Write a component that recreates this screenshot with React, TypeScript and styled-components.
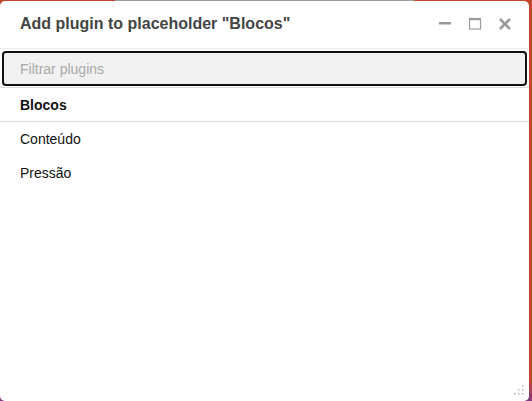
import styled, { createGlobalStyle } from "styled-components";

const GlobalStyle = createGlobalStyle`
    html, body {
        margin: 0;
        padding: 0;
        width: 532px;
        height: 401px;
        overflow: hidden;
    }
    body {
        font-family: "Liberation Sans", Arial, sans-serif;
        background:
            linear-gradient(#9b9b9b, #9b9b9b) 115px 0 / 299px 1px no-repeat,
            linear-gradient(to bottom, #c2462b 0, #c2462b 380px, #7f3a86 401px);
    }
`

const Dialog = styled.div`
    position: relative;
    margin-top: 1px;
    width: 529px;
    height: 400px;
    background: #fff;
    border-radius: 5px;
    display: flex;
    flex-direction: column;
    overflow: hidden;
`

const Header = styled.div`
    display: flex;
    align-items: center;
    height: 47px;
    padding: 0 17px 0 20px;
    border-bottom: 1px solid #ececec;
`

const Title = styled.h1`
    flex: 1;
    margin: 0;
    font-size: 16px;
    font-weight: 700;
    color: #444;
    padding-bottom: 2px;
`

const Controls = styled.div`
    display: flex;
    align-items: center;
    gap: 16px;
    padding-bottom: 2px;
`

const IconButton = styled.button`
    width: 14px;
    height: 14px;
    padding: 0;
    border: none;
    background: none;
    display: flex;
    align-items: center;
    justify-content: center;
    color: #9a9a9a;
    cursor: pointer;
`

const SearchBar = styled.div`
    padding: 2px 2px 1px;
    border-bottom: 1px solid #dcdcdc;
`

const SearchInput = styled.input`
    box-sizing: border-box;
    width: 100%;
    height: 35px;
    border: 2px solid #111;
    border-radius: 4px;
    background: #f1f1f1;
    padding: 0 0 0 16px;
    font-family: inherit;
    font-size: 14px;
    color: #333;
    outline: none;
    caret-color: #111;
    &::placeholder {
        color: #a9a9a9;
    }
`

const List = styled.ul`
    list-style: none;
    margin: 0;
    padding: 0;
`

const Item = styled.li<{ $group?: boolean }>`
    display: flex;
    align-items: center;
    height: ${p => p.$group ? "33px" : "34px"};
    padding-left: 20px;
    font-size: 14px;
    color: #111;
    font-weight: ${p => p.$group ? 700 : 400};
    border-bottom: ${p => p.$group ? "1px solid #dcdcdc" : "none"};
`

const Grip = styled.svg`
    position: absolute;
    right: 4px;
    bottom: 5px;
`

const items = ["Conteúdo", "Pressão"]

function App() {
    return (
        <>
            <GlobalStyle />
            <Dialog>
                <Header>
                    <Title>Add plugin to placeholder "Blocos"</Title>
                    <Controls>
                        <IconButton aria-label="minimize">
                            <svg width="14" height="14" viewBox="0 0 14 14">
                                <rect x="1" y="5" width="12" height="2.5" fill="currentColor" />
                            </svg>
                        </IconButton>
                        <IconButton aria-label="maximize">
                            <svg width="14" height="14" viewBox="0 0 14 14">
                                <rect x="1.5" y="1.5" width="11" height="10.5" fill="none" stroke="currentColor" strokeWidth="1.2" />
                                <rect x="1" y="1" width="12" height="2.2" fill="currentColor" />
                            </svg>
                        </IconButton>
                        <IconButton aria-label="close">
                            <svg width="14" height="14" viewBox="0 0 14 14">
                                <path d="M2 2 L12 12 M12 2 L2 12" stroke="currentColor" strokeWidth="2.6" />
                            </svg>
                        </IconButton>
                    </Controls>
                </Header>
                <SearchBar>
                    <SearchInput autoFocus placeholder="Filtrar plugins" />
                </SearchBar>
                <List>
                    <Item $group>Blocos</Item>
                    {items.map(item => <Item key={item}>{item}</Item>)}
                </List>
                <Grip width="12" height="12" viewBox="0 0 12 12">
                    <g fill="#b8b8b8">
                        <rect x="9" y="1" width="1.5" height="1.5" />
                        <rect x="5" y="5" width="1.5" height="1.5" />
                        <rect x="9" y="5" width="1.5" height="1.5" />
                        <rect x="1" y="9" width="1.5" height="1.5" />
                        <rect x="5" y="9" width="1.5" height="1.5" />
                        <rect x="9" y="9" width="1.5" height="1.5" />
                    </g>
                </Grip>
            </Dialog>
        </>
    )
}

export default App;
